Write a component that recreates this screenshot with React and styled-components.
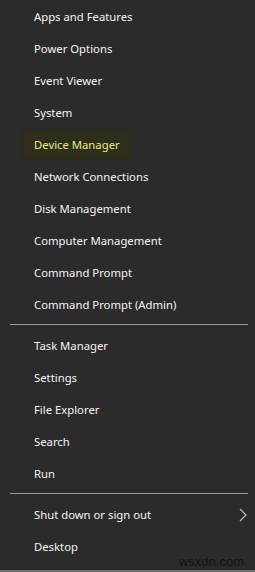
import React from "react";
import styled, { createGlobalStyle } from "styled-components";

const GlobalStyle = createGlobalStyle`
  html, body {
    margin: 0;
    padding: 0;
    background: #2b2b2b;
  }
  body {
    font-family: "Noto Sans", "Open Sans", sans-serif;
  }
`;

const groups = [
  [
    "Apps and Features",
    "Power Options",
    "Event Viewer",
    "System",
    "Device Manager",
    "Network Connections",
    "Disk Management",
    "Computer Management",
    "Command Prompt",
    "Command Prompt (Admin)",
  ],
  ["Task Manager", "Settings", "File Explorer", "Search", "Run"],
  ["Shut down or sign out", "Desktop"],
];

export default function App() {
  return (
    <>
      <GlobalStyle />
      <Menu>
        {groups.map((group, gi) => (
          <React.Fragment key={gi}>
            {gi > 0 && <Divider />}
            {group.map((label) => (
              <Item key={label}>
                <Label $active={label === "Device Manager"}>{label}</Label>
                {label === "Shut down or sign out" && (
                  <Chevron viewBox="0 0 8 14">
                    <path d="M1 1 L7 7 L1 13" />
                  </Chevron>
                )}
              </Item>
            ))}
          </React.Fragment>
        ))}
        <Spacer />
        <Taskbar />
        <Watermark>wsxdn.com</Watermark>
      </Menu>
    </>
  );
}

const Menu = styled.div`
  position: relative;
  width: 255px;
  height: 572px;
  background: #2b2b2b;
  display: flex;
  flex-direction: column;
  overflow: hidden;
`;

const Item = styled.div`
  height: 32px;
  flex-shrink: 0;
  display: flex;
  align-items: center;
  justify-content: space-between;
  padding: 1px 5px 0 24px;
  box-sizing: border-box;
`;

const Label = styled.span`
  font-size: 11.3px;
  line-height: 28px;
  padding: 0 10px;
  border-radius: 4px;
  color: ${(p) => (p.$active ? "#e9ea84" : "#f4f4f4")};
  background: ${(p) => (p.$active ? "#2f2e1c" : "transparent")};
  box-shadow: ${(p) => (p.$active ? "0 0 3px 1px #2c2b1e" : "none")};
`;

const Chevron = styled.svg`
  width: 8px;
  height: 14px;
  fill: none;
  stroke: #bdbdbd;
  stroke-width: 1.2;
  margin-right: 3px;
`;

const Divider = styled.div`
  flex-shrink: 0;
  height: 1px;
  margin: 4px 7px 4px 10px;
  background: #9a9a9a;
`;

const Spacer = styled.div`
  flex: 1;
`;

const Watermark = styled.span`
  position: absolute;
  right: 11px;
  bottom: 3px;
  font-family: "Liberation Sans", Arial, sans-serif;
  font-size: 13px;
  line-height: 14px;
  color: #141414;
`;

const Taskbar = styled.div`
  flex-shrink: 0;
  height: 2px;
  background: #6e6e6e;
`;
